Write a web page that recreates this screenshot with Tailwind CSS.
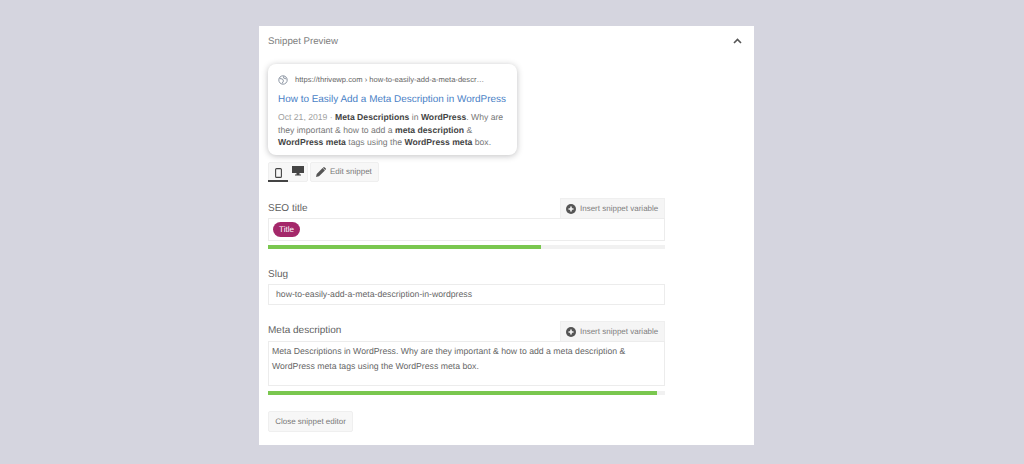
<!DOCTYPE html>
<html lang="en">
<head>
  <meta charset="UTF-8" />
  <title>Snippet Preview</title>
  <script src="https://cdn.jsdelivr.net/npm/@tailwindcss/browser@4"></script>
</head>
<body class="bg-[#d5d5df] font-['Liberation_Sans',Arial,sans-serif] [text-rendering:geometricPrecision] h-[464px] overflow-hidden pt-[26px]">
  <div class="ml-[259px] w-[495px] h-[419px] bg-white pl-[9px] pr-[89px]">
    <!-- Header -->
    <div class="flex justify-between items-center h-[31px] pt-[1px] -mr-[80px] pr-[3px]">
      <span class="text-[9.7px] text-[#808080]">Snippet Preview</span>
      <svg width="9" height="6" viewBox="0 0 9 6" fill="none" stroke="#555" stroke-width="1.6" class="-mt-[3px]"><path d="M1 5l3.5-3.5L8 5"/></svg>
    </div>

    <!-- Google preview card -->
    <div class="mt-[7px] w-[249px] h-[91px] rounded-lg bg-white shadow-[0_1px_6px_rgba(32,33,36,0.28)] pl-[10px] pr-[8px] pt-[9px]">
      <div class="flex items-center h-[14px]">
        <svg width="10" height="10" viewBox="0 0 10 10" fill="none" stroke="#8f98a5" class="mr-[7px]"><circle cx="5" cy="5" r="4.2"/><path d="M1.5 3.5l3 .5 1 2-1.5 2.5M6 1l-.5 2 3 1"/></svg>
        <span class="text-[7.6px] text-[#666] whitespace-nowrap">https://thrivewp.com › how-to-easily-add-a-meta-descr…</span>
      </div>
      <div class="text-[9.95px] leading-[14px] mt-[6px] text-[#4a7fc6] whitespace-nowrap">How to Easily Add a Meta Description in WordPress</div>
      <div class="text-[8.65px] leading-[12.5px] mt-[4px] text-[#777] whitespace-nowrap">
        <div><span class="text-[#a0a0a0]">Oct 21, 2019 ·</span> <b class="text-[#444]">Meta Descriptions</b> in <b class="text-[#444]">WordPress</b>. Why are</div>
        <div>they important &amp; how to add a <b class="text-[#444]">meta description</b> &amp;</div>
        <div><b class="text-[#444]">WordPress meta</b> tags using the <b class="text-[#444]">WordPress meta</b> box.</div>
      </div>
    </div>

    <!-- Preview mode and edit -->
    <div class="flex mt-[7px] gap-[2px]">
      <div class="relative w-[40px] h-[20px] rounded-[2px] bg-[#f7f7f7] border border-[#efefef] flex items-center pl-[6px] gap-[10px]">
        <svg width="7" height="10" viewBox="0 0 7 10" fill="none" stroke="#444" stroke-width="1.1" class="mt-[1px]"><rect x=".6" y=".6" width="5.8" height="8.8" rx="1"/></svg>
        <svg width="12" height="10" viewBox="0 0 12 10" fill="#444" class="-mt-[2px]"><path d="M0 0h12v7H7.5v1.5H9V9.5H3V8.5h1.5V7H0z"/></svg>
        <div class="absolute -left-px -bottom-px w-[20px] h-[2px] bg-[#444]"></div>
      </div>
      <div class="h-[20px] w-[69px] rounded-[2px] bg-[#f7f7f7] border border-[#efefef] flex items-center pl-[5px] gap-[4px]">
        <svg width="10" height="10" viewBox="0 0 10 10" fill="#555"><path d="M0 10l.7-3L6.6 1.1l2.3 2.3L3 9.3zM7.3.4a1 1 0 011.4 0l.9.9a1 1 0 010 1.4l-.4.4-2.3-2.3z"/></svg>
        <span class="text-[8px] text-[#777] whitespace-nowrap">Edit snippet</span>
      </div>
    </div>

    <!-- SEO title -->
    <div class="flex justify-between items-end mt-[16px] h-[20px]">
      <span class="text-[10px] text-[#5f5f5f] pb-[2px]">SEO title</span>
      <div class="h-[20px] w-[105px] bg-[#f5f5f5] border border-[#efefef] border-b-0 flex items-center pl-[5px] gap-[4px]">
        <svg width="10" height="10" viewBox="0 0 10 10"><circle cx="5" cy="5" r="5" fill="#555"/><path d="M2.5 5h5M5 2.5v5" stroke="#f5f5f5" stroke-width="1.6"/></svg>
        <span class="text-[8px] text-[#808080] whitespace-nowrap">Insert snippet variable</span>
      </div>
    </div>
    <div class="h-[23px] w-[397px] border border-[#ececec] flex items-center pl-[4px]">
      <span class="h-[15px] w-[27px] rounded-full bg-[#a4286a] text-white text-[8px] flex items-center justify-center">Title</span>
    </div>
    <div class="h-[4px] w-[397px] mt-[4px] bg-[#f1f1f1]">
      <div class="h-full bg-[#7ac74f]" style="width: 68.8%"></div>
    </div>

    <!-- Slug -->
    <div class="text-[10px] leading-[13px] text-[#5f5f5f] mt-[19px]">Slug</div>
    <div class="h-[21px] w-[397px] mt-[3px] border border-[#ececec] flex items-center pl-[7px] text-[8.7px] text-[#666]">how-to-easily-add-a-meta-description-in-wordpress</div>

    <!-- Meta description -->
    <div class="flex justify-between items-end mt-[16px] h-[20px]">
      <span class="text-[10px] text-[#5f5f5f] pb-[3px]">Meta description</span>
      <div class="h-[20px] w-[105px] bg-[#f5f5f5] border border-[#efefef] border-b-0 flex items-center pl-[5px] gap-[4px]">
        <svg width="10" height="10" viewBox="0 0 10 10"><circle cx="5" cy="5" r="5" fill="#555"/><path d="M2.5 5h5M5 2.5v5" stroke="#f5f5f5" stroke-width="1.6"/></svg>
        <span class="text-[8px] text-[#808080] whitespace-nowrap">Insert snippet variable</span>
      </div>
    </div>
    <div class="h-[45px] w-[397px] border border-[#ececec] pl-[3px] pt-[2px] text-[8.7px] leading-[15px] text-[#666]">
      <div>Meta Descriptions in WordPress. Why are they important &amp; how to add a meta description &amp;</div>
      <div>WordPress meta tags using the WordPress meta box.</div>
    </div>
    <div class="h-[4px] w-[397px] mt-[5px] bg-[#f1f1f1]">
      <div class="h-full bg-[#7ac74f]" style="width: 98%"></div>
    </div>

    <!-- Close -->
    <div class="mt-[16px] h-[21px] w-[85px] rounded-[2px] bg-[#f7f7f7] border border-[#efefef] flex items-center justify-center text-[8px] text-[#777]">Close snippet editor</div>
  </div>
</body>
</html>
